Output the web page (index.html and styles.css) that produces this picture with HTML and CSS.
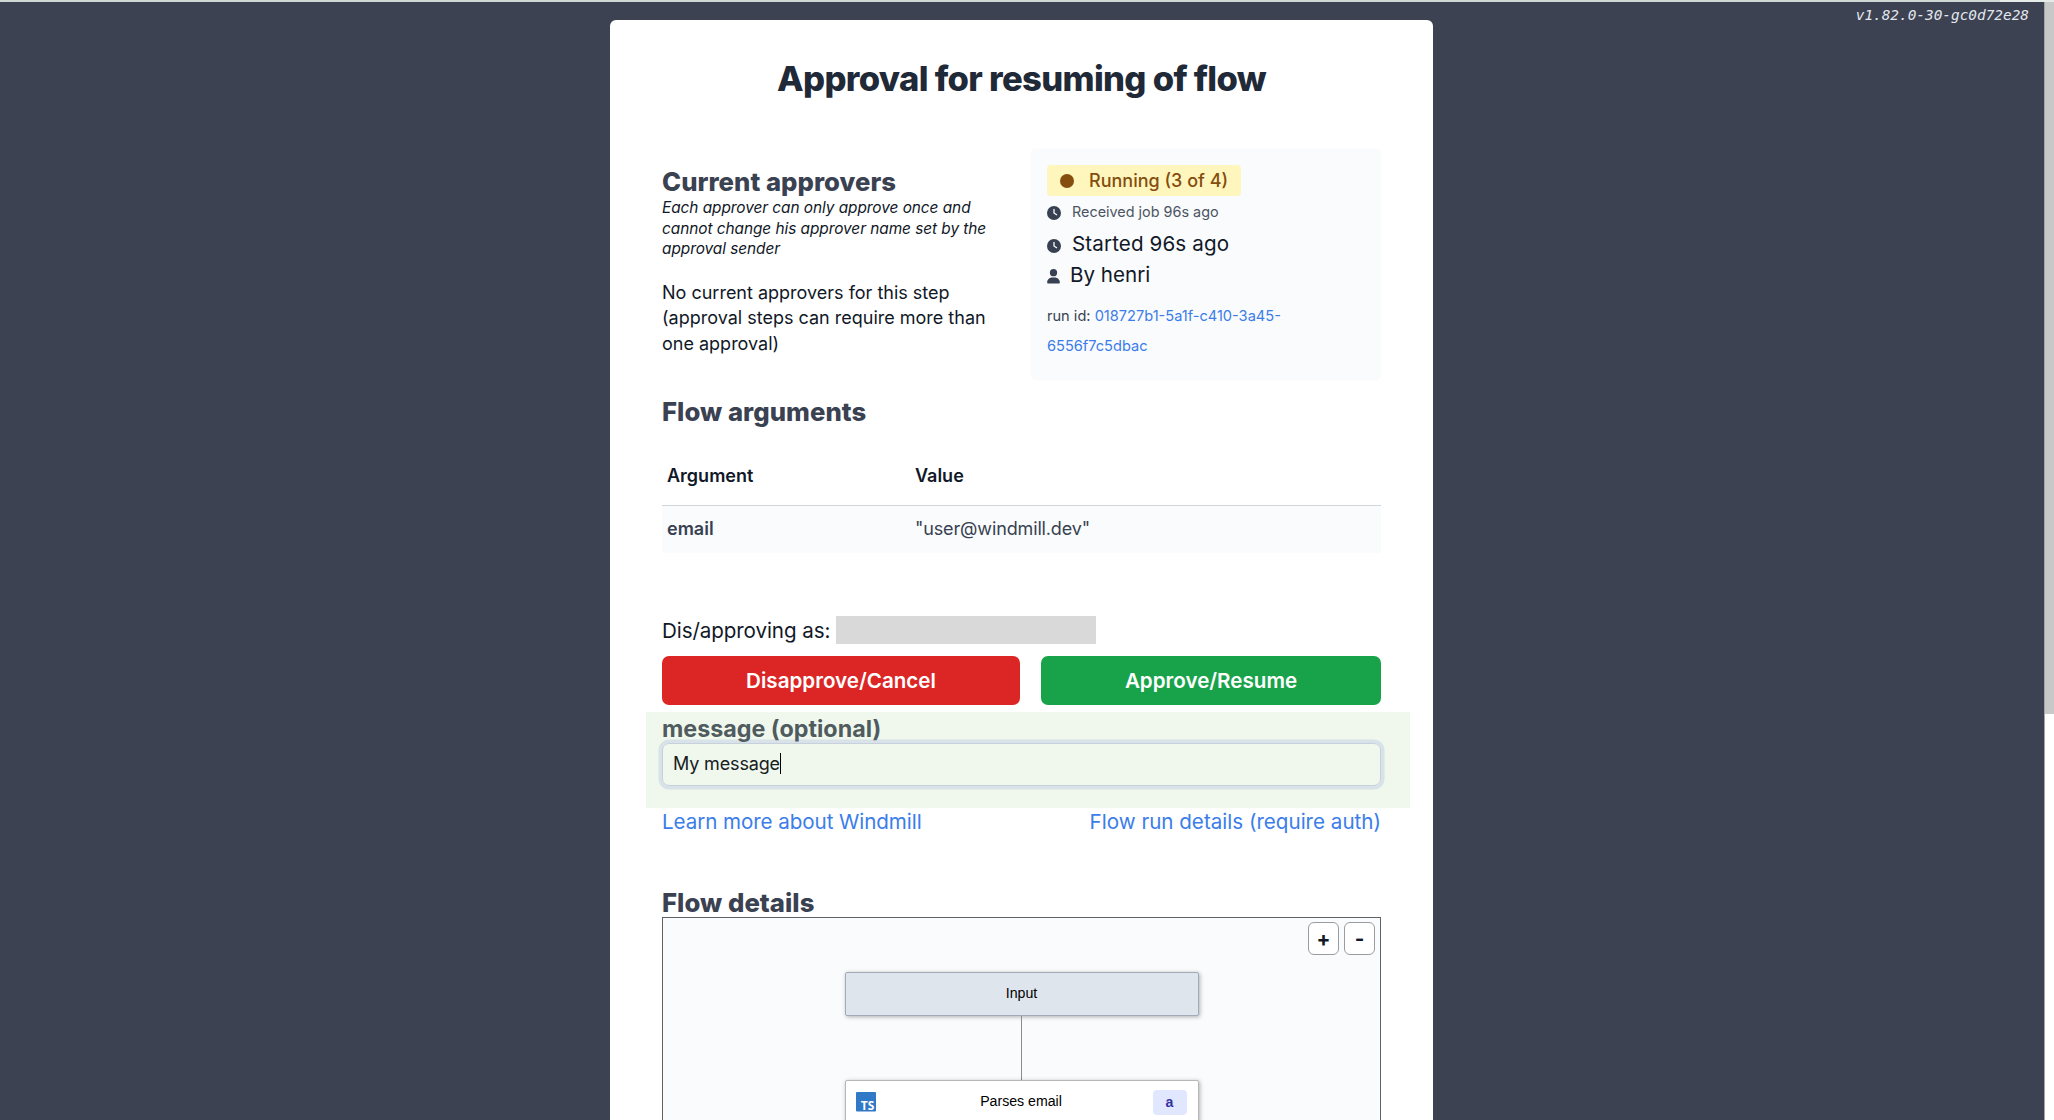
FILE: index.html
```html
<!DOCTYPE html>
<html lang="en">
<head>
<meta charset="utf-8">
<title>Approval for resuming of flow</title>
<link rel="stylesheet" href="styles.css">
</head>
<body>
<div class="window">
  <div class="topline"><span></span></div>
  <div class="page">
    <div class="version">v1.82.0-30-gc0d72e28</div>
    <main class="card">
      <h1>Approval for resuming of flow</h1>
      <section class="overview">
        <div class="approvers">
          <h2>Current approvers</h2>
          <p class="hint">Each approver can only approve once and<br>cannot change his approver name set by the<br>approval sender</p>
          <p class="none">No current approvers for this step<br>(approval steps can require more than<br>one approval)</p>
        </div>
        <aside class="status">
          <div class="badge"><i class="dot"></i><span>Running (3 of 4)</span></div>
          <div class="line small">
            <svg class="clock" viewBox="0 0 512 512"><path fill="#374151" d="M256 0a256 256 0 1 1 0 512 256 256 0 1 1 0-512zm-24 120v136c0 8 4 15.500 10.700 20l96 64c11 7.400 25.900 4.400 33.300-6.700s4.400-25.900-6.700-33.300L280 243.200V120c0-13.300-10.700-24-24-24s-24 10.700-24 24z"/></svg>
            <span>Received job 96s ago</span>
          </div>
          <div class="line started">
            <svg class="clock" viewBox="0 0 512 512"><path fill="#374151" d="M256 0a256 256 0 1 1 0 512 256 256 0 1 1 0-512zm-24 120v136c0 8 4 15.500 10.700 20l96 64c11 7.400 25.900 4.400 33.300-6.700s4.400-25.900-6.700-33.300L280 243.200V120c0-13.300-10.700-24-24-24s-24 10.700-24 24z"/></svg>
            <span>Started 96s ago</span>
          </div>
          <div class="line author">
            <svg class="user" viewBox="0 0 448 512"><path fill="#374151" d="M224 256a128 128 0 1 0 0-256 128 128 0 0 0 0 256zm-50 48C78 304 0 382 0 482c0 17 13 30 30 30h388c17 0 30-13 30-30 0-100-78-178-174-178z"/></svg>
            <span>By henri</span>
          </div>
          <p class="run">run id: <a>018727b1-5a1f-c410-3a45-<br>6556f7c5dbac</a></p>
        </aside>
      </section>
      <h2 class="args-title">Flow arguments</h2>
      <div class="table">
        <div class="tr head"><span>Argument</span><span>Value</span></div>
        <div class="tr body"><b>email</b><span>"user@windmill.dev"</span></div>
      </div>
      <div class="as"><span>Dis/approving as:</span><i class="redacted"></i></div>
      <div class="actions">
        <button class="red">Disapprove/Cancel</button>
        <button class="green">Approve/Resume</button>
      </div>
      <div class="message">
        <h3>message (optional)</h3>
        <div class="input"><span>My message</span><i class="caret"></i></div>
      </div>
      <div class="links"><a class="learn">Learn more about Windmill</a><a>Flow run details (require auth)</a></div>
      <h2 class="details-title">Flow details</h2>
      <div class="graph">
        <div class="zoom"><button>+</button><button>-</button></div>
        <div class="node start">Input</div>
        <div class="edge"></div>
        <div class="node step">
          <svg class="ts" viewBox="0 0 20 20"><rect width="20" height="19.500" rx="1" fill="#3178c6"/><text x="4.800" y="17.500" textLength="13.500" lengthAdjust="spacingAndGlyphs">TS</text></svg>
          <span>Parses email</span>
          <b>a</b>
        </div>
      </div>
    </main>
  </div>
  <div class="scrollbar"></div>
</div>
</body>
</html>
```
FILE: styles.css
```css
* { box-sizing: border-box; }
html, body { margin: 0; height: 100%; overflow: hidden; }
body { font-family: Inter, "Liberation Sans", sans-serif; color: #111827; font-size: 20.6px; }
h1, h2, h3, p { margin: 0; }
a { color: #3b7de9; }
i { font-style: normal; }
button { font-family: inherit; padding: 0; }

.window { height: 1120px; display: grid; grid-template-columns: 1fr 10px; grid-template-rows: 2px 1118px; overflow: hidden; }
.topline { grid-column: 1 / 3; background: #d0d8d5; display: flex; justify-content: flex-end; }
.topline span { width: 54px; background: #e6eae8; }
.page { position: relative; background: #3c4252; padding-top: 18px; overflow: hidden; }
.scrollbar { background: linear-gradient(#c9c8c8 712px, #fff 712px); border-left: 1px solid #a3a5ab; }
.version { position: absolute; right: 15px; top: 3px; font: italic 14.4px/20px "DejaVu Sans Mono", monospace; color: #e3e7ee; white-space: nowrap; }

.card { width: 823px; height: 1200px; margin-left: 610px; background: #fff; border-radius: 6px; padding: 38px 52px 0; white-space: nowrap; }
h1 { font-size: 34.6px; line-height: 40px; font-weight: 800; text-align: center; color: #1f2937; letter-spacing: -.67px; }
h2 { font-size: 25.7px; line-height: 32px; font-weight: 800; color: #3a4151; letter-spacing: .05px; }

.overview { display: flex; justify-content: space-between; margin-top: 50px; height: 232px; }
.approvers { padding-top: 17.6px; }
.hint { font-size: 15.4px; line-height: 20.7px; font-style: italic; letter-spacing: -.05px; padding-top: .4px; }
.none { font-size: 18px; line-height: 25.7px; margin-top: 19.500px; }
.status { width: 350px; height: 231px; margin-top: 1px; background: #fafbfc; border-radius: 6px; padding: 16px; box-shadow: 0 0 2px #f3f5f6; }
.badge { width: 194px; height: 31px; background: #fef6bd; border-radius: 4px; color: #854d0e; font-size: 18px; line-height: 31px; font-weight: 500; display: flex; align-items: center; padding-left: 13px; gap: 15px; }
.dot { width: 14px; height: 14px; border-radius: 50%; background: #854d0e; }
.line { height: 30.8px; line-height: 30.8px; display: flex; align-items: center; gap: 11px; }
.line.small { font-size: 14.4px; color: #4b5563; height: 33.4px; }
.started { letter-spacing: .12px; }
.clock { width: 14px; height: 14px; position: relative; top: 1px; }
.small .clock { top: 0; }
.user { width: 13px; height: 14.5px; position: relative; top: 1px; }
.author { gap: 10px; }
.run { font-size: 14.6px; line-height: 30.9px; margin-top: 9.6px; color: #374151; }

.args-title { margin-top: 15.6px; }
.table { margin-top: 17.4px; font-size: 18px; }
.tr { display: grid; grid-template-columns: 248px 1fr; padding-left: 5px; align-items: center; }
.head { height: 61px; border-bottom: 1px solid #d1d5db; font-weight: 600; padding-top: 1.500px; }
.body { height: 47px; padding-bottom: 1px; background: #fafbfc; color: #374151; letter-spacing: -.14px; }
.body b { font-weight: 600; letter-spacing: 0; }
.as { margin-top: 63px; height: 28px; display: flex; align-items: center; justify-content: space-between; width: 434px; letter-spacing: -.09px; }
.as span { padding-top: 2px; }
.redacted { width: 260px; height: 28px; background: #d9d9d9; }
.actions { margin-top: 12px; display: grid; grid-template-columns: 358px 340px; justify-content: space-between; }
.actions button { height: 49px; border: 0; border-radius: 7px; color: #fff; font-size: 20.6px; font-weight: 600; }
.red { background: #dc2626; }
.green { background: #18a34a; }
.message { margin: 7px -29px 0 -16px; height: 96px; padding: 2px 29px 0 16px; background: #f0f7ec; }
h3 { font-size: 23.3px; line-height: 29px; font-weight: 700; color: #4f5b5e; }
.input { height: 43px; border: 1px solid #c8cfdd; box-shadow: 0 0 0 3.5px #d8e2e9; border-radius: 7px; padding: 0 0 1px 10px; font-size: 18px; letter-spacing: -.15px; display: flex; align-items: center; color: #16201f; }
.caret { width: 1px; height: 21px; background: #000; }
.links { display: flex; justify-content: space-between; line-height: 27px; }
.learn { letter-spacing: -.07px; }
.details-title { margin-top: 52.7px; line-height: 30px; }

.graph { position: relative; height: 400px; border: 1px solid #5f6267; background: #fafbfc; display: flex; flex-direction: column; align-items: center; padding-top: 54.2px; font-family: "Liberation Sans", Arial, sans-serif; font-size: 14.15px; color: #000; margin-top: -.7px; }
.zoom { position: absolute; right: 5px; top: 4px; display: flex; gap: 5px; }
.zoom button { width: 31px; height: 33px; border: 1px solid #9a9ca0; border-radius: 6px; background: #fff; font: 700 20.6px/31px Inter, sans-serif; color: #111827; }
.node { width: 354px; height: 44px; border: 1px solid #a3abb8; border-radius: 2px; box-shadow: 1px 1px 4px rgba(0,0,0,.3); display: flex; align-items: center; justify-content: center; }
.start { background: #dfe5ed; padding-bottom: 2px; }
.edge { width: 1px; height: 64px; background: #8c8c8c; }
.step { background: #fff; display: grid; grid-template-columns: 34px 1fr 34px; text-align: center; padding: 0 11px 0 10px; border-color: #b7b7b7; }
.step span { padding-bottom: 1.500px; }
.ts { width: 20px; height: 20px; }
.ts text { font: 700 11.6px "Open Sans", sans-serif; fill: #fff; }
.step b { background: #e0e7ff; color: #3730a3; border-radius: 4px; line-height: 25px; }
```
